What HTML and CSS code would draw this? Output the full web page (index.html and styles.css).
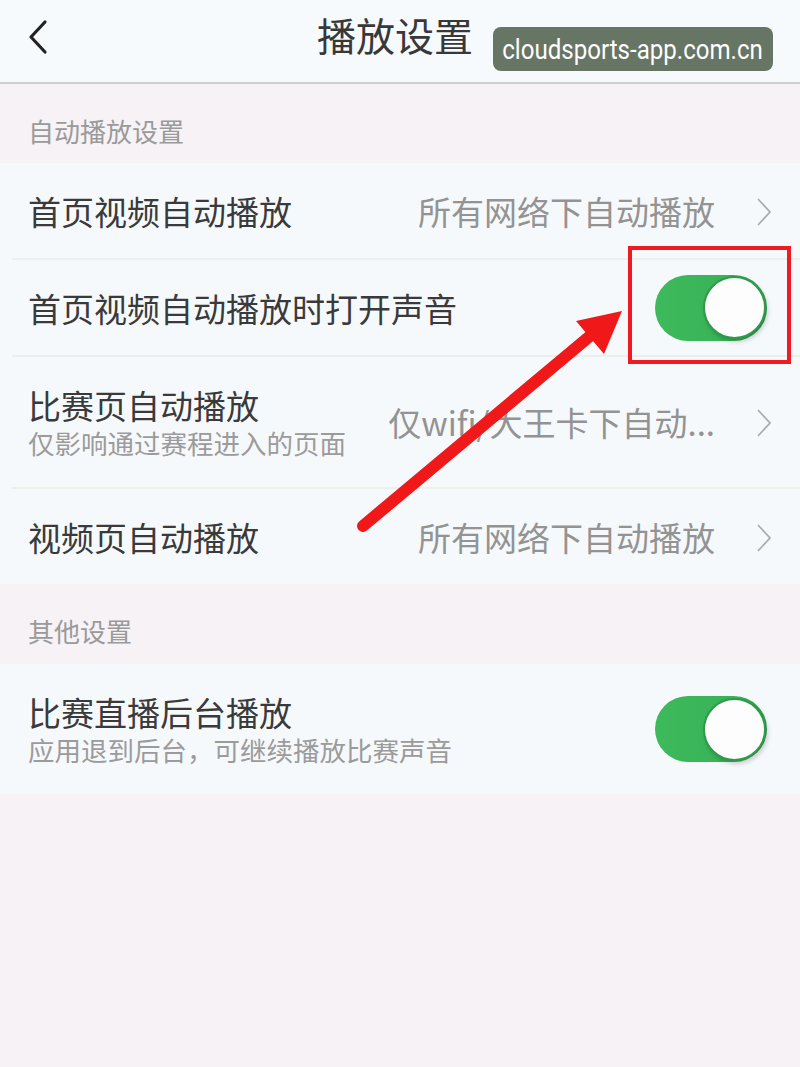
FILE: index.html
```html
<!DOCTYPE html>
<html lang="zh">
<head>
<meta charset="utf-8">
<title>播放设置</title>
<link rel="stylesheet" href="styles.css">
</head>
<body>
<div class="page">
  <header class="topbar">
    <div class="back">
      <svg width="24" height="36" viewBox="0 0 24 36"><path d="M19 3 L5 18 L19 33" fill="none" stroke="#222" stroke-width="3.2" stroke-linecap="round" stroke-linejoin="round"/></svg>
    </div>
    <h1 class="title">播放设置</h1>
    <div class="spacer"></div>
  </header>

  <div class="section-head">自动播放设置</div>
  <div class="group">
    <div class="row">
      <div class="label"><div class="name">首页视频自动播放</div></div>
      <div class="value">所有网络下自动播放</div>
      <svg class="chev" width="18" height="30" viewBox="0 0 18 30"><path d="M3 2 L15 15 L3 28" fill="none" stroke="#acacac" stroke-width="1.8"/></svg>
    </div>
    <div class="divider"></div>
    <div class="row">
      <div class="label"><div class="name">首页视频自动播放时打开声音</div></div>
      <div class="toggle"><div class="knob"></div></div>
    </div>
    <div class="divider"></div>
    <div class="row tall">
      <div class="label">
        <div class="name">比赛页自动播放</div>
        <div class="sub">仅影响通过赛程进入的页面</div>
      </div>
      <div class="value">仅wifi/大王卡下自动...</div>
      <svg class="chev" width="18" height="30" viewBox="0 0 18 30"><path d="M3 2 L15 15 L3 28" fill="none" stroke="#acacac" stroke-width="1.8"/></svg>
    </div>
    <div class="divider"></div>
    <div class="row">
      <div class="label"><div class="name">视频页自动播放</div></div>
      <div class="value">所有网络下自动播放</div>
      <svg class="chev" width="18" height="30" viewBox="0 0 18 30"><path d="M3 2 L15 15 L3 28" fill="none" stroke="#acacac" stroke-width="1.8"/></svg>
    </div>
  </div>

  <div class="section-head">其他设置</div>
  <div class="group">
    <div class="row tall">
      <div class="label">
        <div class="name">比赛直播后台播放</div>
        <div class="sub">应用退到后台，可继续播放比赛声音</div>
      </div>
      <div class="toggle"><div class="knob"></div></div>
    </div>
  </div>

  <div class="watermark"><span class="wm-text">cloudsports-app.com.cn</span></div>
  <div class="redbox"></div>
  <svg class="arrow" width="800" height="1067" viewBox="0 0 800 1067">
    <line x1="363" y1="526" x2="590" y2="336" stroke="#f01818" stroke-width="12" stroke-linecap="round"/>
    <polygon points="622,311 576,321 604,354" fill="#f01818"/>
  </svg>
</div>
</body>
</html>
```

FILE: styles.css
```css
* { box-sizing: border-box; margin: 0; padding: 0; }
html, body { width: 800px; height: 1067px; }
body {
  background: #f6f2f5;
  font-family: "Noto Sans CJK SC", "Noto Sans", sans-serif;
  color: #3a3a3a;
}
.page { position: relative; width: 800px; min-height: 1067px; background: #f6f2f5; }

.topbar {
  height: 84px;
  background: #f7fafc;
  border-bottom: 2px solid #cfd0cf;
  display: grid;
  grid-template-columns: 120px 1fr 120px;
  align-items: center;
}
.back { padding-left: 26px; display: flex; align-items: center; height: 36px; margin-top: -8px; }
.title {
  text-align: center;
  font-size: 39px;
  font-weight: 400;
  color: #383838;
  margin-top: -14px;
  margin-right: 10px;
}

.section-head {
  height: 79px;
  padding: 31px 28px 0;
  font-size: 26px;
  line-height: 32px;
  color: #9a9a9a;
}
.group + .section-head { height: 80px; }

.group { background: #f6f9fc; }
.row {
  height: 95px;
  padding: 0 27px 0 28px;
  display: flex;
  align-items: center;
}
.row.tall { height: 130px; }
.label { flex: 1; min-width: 0; }
.name { font-size: 33px; line-height: 38px; color: #3a3a3a; }
.sub { font-size: 26.5px; line-height: 32px; color: #9b9b9b; margin-top: 3px; }
.value {
  font-size: 33px;
  color: #939393;
  white-space: nowrap;
  margin-right: 40px;
}
.chev { flex: none; margin-top: 2px; }

.divider { height: 2px; background: #eeeeea; margin-left: 12px; }

.toggle {
  flex: none;
  width: 112px;
  height: 66px;
  border-radius: 33px;
  background: linear-gradient(90deg, #3dba5c 0%, #38b257 70%, #2f9f4c 100%);
  margin-right: 6px;
  display: flex;
  justify-content: flex-end;
  align-items: center;
  padding-right: 1px;
}
.knob {
  width: 63px;
  height: 63px;
  border-radius: 50%;
  background: #fdfdfd;
  border: 2px solid #2f9a4b;
  box-shadow: 2px 3px 4px rgba(0,0,0,0.18);
}

.watermark {
  position: absolute;
  left: 493px;
  top: 27px;
  width: 280px;
  height: 44px;
  border-radius: 8px;
  background: #677565;
  display: flex;
  align-items: center;
  justify-content: center;
  overflow: hidden;
}
.wm-text {
  display: inline-block;
  white-space: nowrap;
  color: #ffffff;
  font-family: "Roboto", "Liberation Sans", sans-serif;
  font-size: 28px;
  line-height: 44px;
  transform: scaleX(0.86);
  margin-top: 2px;
}
.redbox {
  position: absolute;
  left: 628px;
  top: 246px;
  width: 163px;
  height: 118px;
  border: 4px solid #ef1a22;
}
.arrow { position: absolute; left: 0; top: 0; pointer-events: none; }
```
